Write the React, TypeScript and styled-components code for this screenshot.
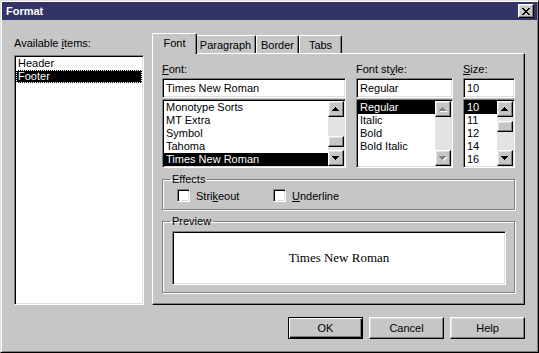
import React from 'react';
import styled, { createGlobalStyle, css } from 'styled-components';

const FACE = '#c6c6c6';
const SHADOW = '#808080';
const LIGHT = '#dfdfdf';
const TRACK = '#e3e3e3';

const GlobalStyle = createGlobalStyle`
  html, body {
    margin: 0;
    padding: 0;
    background: ${FACE};
  }
  body {
    font-family: "Liberation Sans", Arial, sans-serif;
    font-size: 11px;
    color: #000;
  }
  *, *::before, *::after {
    box-sizing: border-box;
  }
`;

const raised = css`
  border: 1px solid;
  border-color: #fff #000 #000 #fff;
  box-shadow: inset -1px -1px ${SHADOW}, inset 1px 1px ${LIGHT};
  background: ${FACE};
`;

const sunken = css`
  border: 1px solid;
  border-color: ${SHADOW} #fff #fff ${SHADOW};
  box-shadow: inset 1px 1px #000, inset -1px -1px ${LIGHT};
  background: #fff;
`;

const Window = styled.div`
  width: 539px;
  height: 353px;
  display: flex;
  flex-direction: column;
  padding: 1px;
  background: ${FACE};
  border: 1px solid;
  border-color: ${LIGHT} #000 #000 ${LIGHT};
  box-shadow: inset 1px 1px #fff, inset -1px -1px ${SHADOW};
`;

const TitleBar = styled.div`
  flex: none;
  height: 18px;
  display: flex;
  align-items: center;
  justify-content: space-between;
  padding: 0 3px 0 4px;
  background: #333366;
  color: #fff;
  font-weight: bold;
`;

const CloseButton = styled.div`
  ${raised};
  width: 16px;
  height: 14px;
  display: flex;
  align-items: center;
  justify-content: center;
`;

const Body = styled.div`
  flex: 1;
  display: flex;
  flex-direction: column;
  padding: 13px 12px 0 12px;
`;

const MainRow = styled.div`
  height: 272px;
  display: flex;
  gap: 8px;
`;

const LeftColumn = styled.div`
  width: 130px;
  display: flex;
  flex-direction: column;
`;

const Label = styled.div`
  height: 13px;
  line-height: 13px;
  white-space: nowrap;
`;

const Key = styled.span`
  text-decoration: underline;
`;

const ListBox = styled.div<{ $height?: number }>`
  ${sunken};
  display: flex;
  padding: 1px;
  ${(p) => (p.$height ? `height: ${p.$height}px;` : 'flex: 1;')}
`;

const Items = styled.div`
  flex: 1;
  min-width: 0;
  overflow: hidden;
`;

const Item = styled.div<{ $selected?: boolean; $focused?: boolean }>`
  height: 13px;
  line-height: 13px;
  padding-left: 2px;
  white-space: nowrap;
  ${(p) =>
    p.$selected &&
    css`
      background: #000;
      color: #fff;
    `}
  ${(p) =>
    p.$focused &&
    css`
      outline: 1px dotted #fff;
      outline-offset: -1px;
    `}
`;

const ScrollBar = styled.div`
  flex: none;
  width: 16px;
  display: flex;
  flex-direction: column;
  background: ${TRACK};
`;

const ScrollButton = styled.div`
  ${raised};
  flex: none;
  height: 16px;
  display: flex;
  align-items: center;
  justify-content: center;
`;

const Track = styled.div`
  flex: 1;
`;

const Thumb = styled.div<{ $offset: number }>`
  ${raised};
  height: 11px;
  margin-top: ${(p) => p.$offset}px;
`;

const RightColumn = styled.div`
  flex: 1;
  display: flex;
  flex-direction: column;
`;

const TabStrip = styled.div`
  position: relative;
  z-index: 1;
  height: 20px;
  display: flex;
  align-items: flex-end;
  padding-left: 2px;
`;

const Tab = styled.div<{ $width: number; $active?: boolean }>`
  width: ${(p) => p.$width}px;
  height: 18px;
  display: flex;
  align-items: center;
  justify-content: center;
  background: ${FACE};
  border-top: 1px solid #fff;
  border-left: 1px solid #fff;
  border-right: 1px solid #000;
  border-radius: 2px 2px 0 0;
  box-shadow: inset -1px 0 ${SHADOW};
  ${(p) =>
    p.$active &&
    css`
      height: 21px;
      margin: 0 -2px -1px;
      padding-bottom: 3px;
      z-index: 1;
    `}
`;

const Panel = styled.div`
  flex: 1;
  padding: 9px 9px 0 9px;
  border: 1px solid;
  border-color: #fff #000 #000 #fff;
  box-shadow: inset -1px -1px ${SHADOW};
`;

const FieldRow = styled.div`
  display: flex;
  gap: 10px;
`;

const Field = styled.div<{ $width: number }>`
  width: ${(p) => p.$width}px;
  display: flex;
  flex-direction: column;
  gap: 2px;
`;

const TextBox = styled.div`
  ${sunken};
  height: 20px;
  line-height: 18px;
  padding: 0 3px;
  margin-bottom: -1px;
  white-space: nowrap;
`;

const Group = styled.fieldset<{ $gap: number }>`
  margin: ${(p) => p.$gap}px 0 0;
  min-width: 0;
  padding: 3px 8px 7px 9px;
  border: 1px solid ${SHADOW};
  box-shadow: inset 1px 1px #fff, 1px 1px #fff;
`;

const Legend = styled.legend`
  margin-left: -2px;
  padding: 0 2px;
  height: 13px;
  line-height: 13px;
`;

const CheckRow = styled.div`
  display: flex;
  height: 13px;
  margin-left: 5px;
`;

const CheckItem = styled.div<{ $width?: number }>`
  display: flex;
  align-items: center;
  gap: 6px;
  ${(p) => p.$width && `width: ${p.$width}px;`}
`;

const CheckBox = styled.div`
  ${sunken};
  width: 13px;
  height: 13px;
`;

const PreviewBox = styled.div`
  ${sunken};
  height: 54px;
  display: flex;
  align-items: center;
  justify-content: center;
  font-family: "Liberation Serif", "Times New Roman", serif;
  font-size: 13px;
`;

const ButtonRow = styled.div`
  display: flex;
  justify-content: flex-end;
  gap: 6px;
  margin-top: 12px;
`;

const Button = styled.div<{ $default?: boolean }>`
  ${raised};
  width: 75px;
  height: 22px;
  display: flex;
  align-items: center;
  justify-content: center;
  ${(p) =>
    p.$default &&
    css`
      border-color: #000;
      box-shadow: inset 1px 1px #fff, inset -1px -1px #000, inset -2px -2px ${SHADOW};
    `}
`;

const pixelPath = (rows: [number, number][]) =>
  rows.map(([x, w], y) => `M${x} ${y}h${w}v1h-${w}z`).join('');

const Arrow: React.FC<{ dir: 'up' | 'down'; disabled?: boolean }> = ({ dir, disabled }) => {
  const rows: [number, number][] = [
    [3, 1],
    [2, 3],
    [1, 5],
    [0, 7],
  ];
  const d = pixelPath(dir === 'up' ? rows : [...rows].reverse());
  return (
    <svg width={8} height={5} viewBox="0 0 8 5" shapeRendering="crispEdges">
      {disabled && <path d={d} fill="#fff" transform="translate(1 1)" />}
      <path d={d} fill={disabled ? SHADOW : '#000'} />
    </svg>
  );
};

const CloseGlyph: React.FC = () => {
  const rows: [number, number][][] = [
    [[0, 2], [6, 2]],
    [[1, 2], [5, 2]],
    [[2, 4]],
    [[3, 2]],
    [[2, 4]],
    [[1, 2], [5, 2]],
    [[0, 2], [6, 2]],
  ];
  const d = rows
    .map((segs, y) => segs.map(([x, w]) => `M${x} ${y}h${w}v1h-${w}z`).join(''))
    .join('');
  return (
    <svg width={8} height={7} viewBox="0 0 8 7" shapeRendering="crispEdges">
      <path d={d} fill="#000" />
    </svg>
  );
};

type ListProps = {
  items: string[];
  selected: number;
  height?: number;
  scroll?: { thumb?: number; disabled?: boolean };
  focused?: boolean;
};

const List: React.FC<ListProps> = ({ items, selected, height, scroll, focused }) => (
  <ListBox $height={height}>
    <Items>
      {items.map((name, i) => (
        <Item key={name} $selected={i === selected} $focused={focused && i === selected}>
          {name}
        </Item>
      ))}
    </Items>
    {scroll && (
      <ScrollBar>
        <ScrollButton>
          <Arrow dir="up" disabled={scroll.disabled} />
        </ScrollButton>
        <Track>{scroll.thumb !== undefined && <Thumb $offset={scroll.thumb} />}</Track>
        <ScrollButton>
          <Arrow dir="down" disabled={scroll.disabled} />
        </ScrollButton>
      </ScrollBar>
    )}
  </ListBox>
);

const tabs = [
  { name: 'Font', width: 45 },
  { name: 'Paragraph', width: 61 },
  { name: 'Border', width: 43 },
  { name: 'Tabs', width: 43 },
];

const fonts = ['Monotype Sorts', 'MT Extra', 'Symbol', 'Tahoma', 'Times New Roman'];
const styles = ['Regular', 'Italic', 'Bold', 'Bold Italic'];
const sizes = ['10', '11', '12', '14', '16'];

const App: React.FC = () => {
  return (
    <>
      <GlobalStyle />
      <Window>
        <TitleBar>
          <span>Format</span>
          <CloseButton>
            <CloseGlyph />
          </CloseButton>
        </TitleBar>
        <Body>
          <MainRow>
            <LeftColumn>
              <Label style={{ marginTop: 4, marginBottom: 5 }}>
                Available <Key>i</Key>tems:
              </Label>
              <List items={['Header', 'Footer']} selected={1} focused />
            </LeftColumn>
            <RightColumn>
              <TabStrip>
                {tabs.map((t, i) => (
                  <Tab key={t.name} $width={t.width} $active={i === 0}>
                    {t.name}
                  </Tab>
                ))}
              </TabStrip>
              <Panel>
                <FieldRow>
                  <Field $width={184}>
                    <Label>
                      <Key>F</Key>ont:
                    </Label>
                    <TextBox>Times New Roman</TextBox>
                    <List items={fonts} selected={4} height={69} scroll={{ thumb: 19 }} />
                  </Field>
                  <Field $width={97}>
                    <Label>
                      Font st<Key>y</Key>le:
                    </Label>
                    <TextBox>Regular</TextBox>
                    <List items={styles} selected={0} height={69} scroll={{ disabled: true }} />
                  </Field>
                  <Field $width={52}>
                    <Label>
                      <Key>S</Key>ize:
                    </Label>
                    <TextBox>10</TextBox>
                    <List items={sizes} selected={0} height={69} scroll={{ thumb: 4 }} />
                  </Field>
                </FieldRow>
                <Group $gap={5}>
                  <Legend>Effects</Legend>
                  <CheckRow>
                    <CheckItem $width={96}>
                      <CheckBox />
                      <span>
                        Stri<Key>k</Key>eout
                      </span>
                    </CheckItem>
                    <CheckItem>
                      <CheckBox />
                      <span>
                        <Key>U</Key>nderline
                      </span>
                    </CheckItem>
                  </CheckRow>
                </Group>
                <Group $gap={5}>
                  <Legend>Preview</Legend>
                  <PreviewBox>Times New Roman</PreviewBox>
                </Group>
              </Panel>
            </RightColumn>
          </MainRow>
          <ButtonRow>
            <Button $default>OK</Button>
            <Button>Cancel</Button>
            <Button>Help</Button>
          </ButtonRow>
        </Body>
      </Window>
    </>
  );
};

export default App;
